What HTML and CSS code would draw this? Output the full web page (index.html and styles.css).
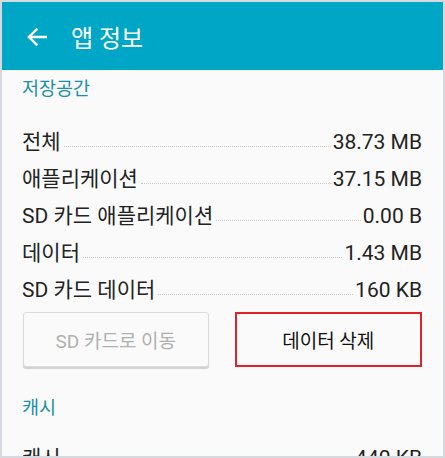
FILE: index.html
```html
<!DOCTYPE html>
<html lang="ko">
<head>
<meta charset="utf-8">
<link rel="stylesheet" href="styles.css">
</head>
<body>
<div class="frame">
  <header class="appbar">
    <svg class="back" width="20" height="18" viewBox="0 0 20 18" aria-hidden="true">
      <path d="M19 9H2M9.5 1.5L2 9l7.5 7.5" fill="none" stroke="#fff" stroke-width="2.4" stroke-linecap="square"/>
    </svg>
    <h1 class="title">앱 정보</h1>
  </header>
  <main class="content">
    <h2 class="section">저장공간</h2>
    <div class="rows">
      <div class="row"><span class="label">전체</span><span class="dots"></span><span class="value">38.73 MB</span></div>
      <div class="row"><span class="label">애플리케이션</span><span class="dots"></span><span class="value">37.15 MB</span></div>
      <div class="row"><span class="label">SD 카드 애플리케이션</span><span class="dots"></span><span class="value">0.00 B</span></div>
      <div class="row"><span class="label">데이터</span><span class="dots"></span><span class="value">1.43 MB</span></div>
      <div class="row"><span class="label">SD 카드 데이터</span><span class="dots"></span><span class="value">160 KB</span></div>
    </div>
    <div class="buttons">
      <button class="btn btn-disabled">SD 카드로 이동</button>
      <button class="btn btn-marked">데이터 삭제</button>
    </div>
    <h2 class="section section-cache">캐시</h2>
    <div class="rows">
      <div class="row"><span class="label">캐시</span><span class="dots"></span><span class="value">440 KB</span></div>
    </div>
  </main>
</div>
</body>
</html>
```

FILE: styles.css
```css
* { box-sizing: border-box; margin: 0; padding: 0; }
html, body { width: 445px; height: 458px; overflow: hidden; }
body {
  font-family: Roboto, "Noto Sans CJK KR", sans-serif;
  background: #d6dade;
}
.frame {
  width: 445px;
  height: 458px;
  border: 2px solid #d6dade;
  background: #fafafa;
  overflow: hidden;
}
.appbar {
  height: 68px;
  background: #00a6c5;
  display: flex;
  align-items: center;
  padding-left: 25px;
  gap: 24px;
}
.back { display: block; margin-top: 2px; }
.title {
  color: #fff;
  font-size: 24px;
  font-weight: 400;
}
.content {
  padding: 0 21px 0 20px;
}
.section {
  font-size: 18.5px;
  font-weight: 400;
  color: #1b8fa6;
  line-height: 24px;
  padding-top: 7px;
  padding-bottom: 23px;
}
.row {
  display: flex;
  align-items: baseline;
  height: 37px;
  line-height: 37px;
  font-size: 21px;
  color: #222;
}
.dots {
  flex: 1;
  border-bottom: 1px dotted #c8c8c8;
  margin: 0 2px 0 3px;
  position: relative;
  top: -2px;
}
.buttons {
  display: flex;
  gap: 26px;
  margin-top: 3px;
  padding-left: 1px;
}
.btn {
  flex: 1;
  height: 55px;
  font-family: Roboto, "Noto Sans CJK KR", sans-serif;
  font-size: 19px;
  background: #fafafa;
}
.btn-disabled {
  color: #b0b0b0;
  border: 1px solid #dcdcdc;
  border-radius: 3px;
  box-shadow: 0 2px 1px #d0d0d0;
}
.btn-marked {
  color: #111;
  border: 2px solid #e2202a;
}
.section-cache {
  padding-top: 29px;
  padding-bottom: 20px;
}
```
